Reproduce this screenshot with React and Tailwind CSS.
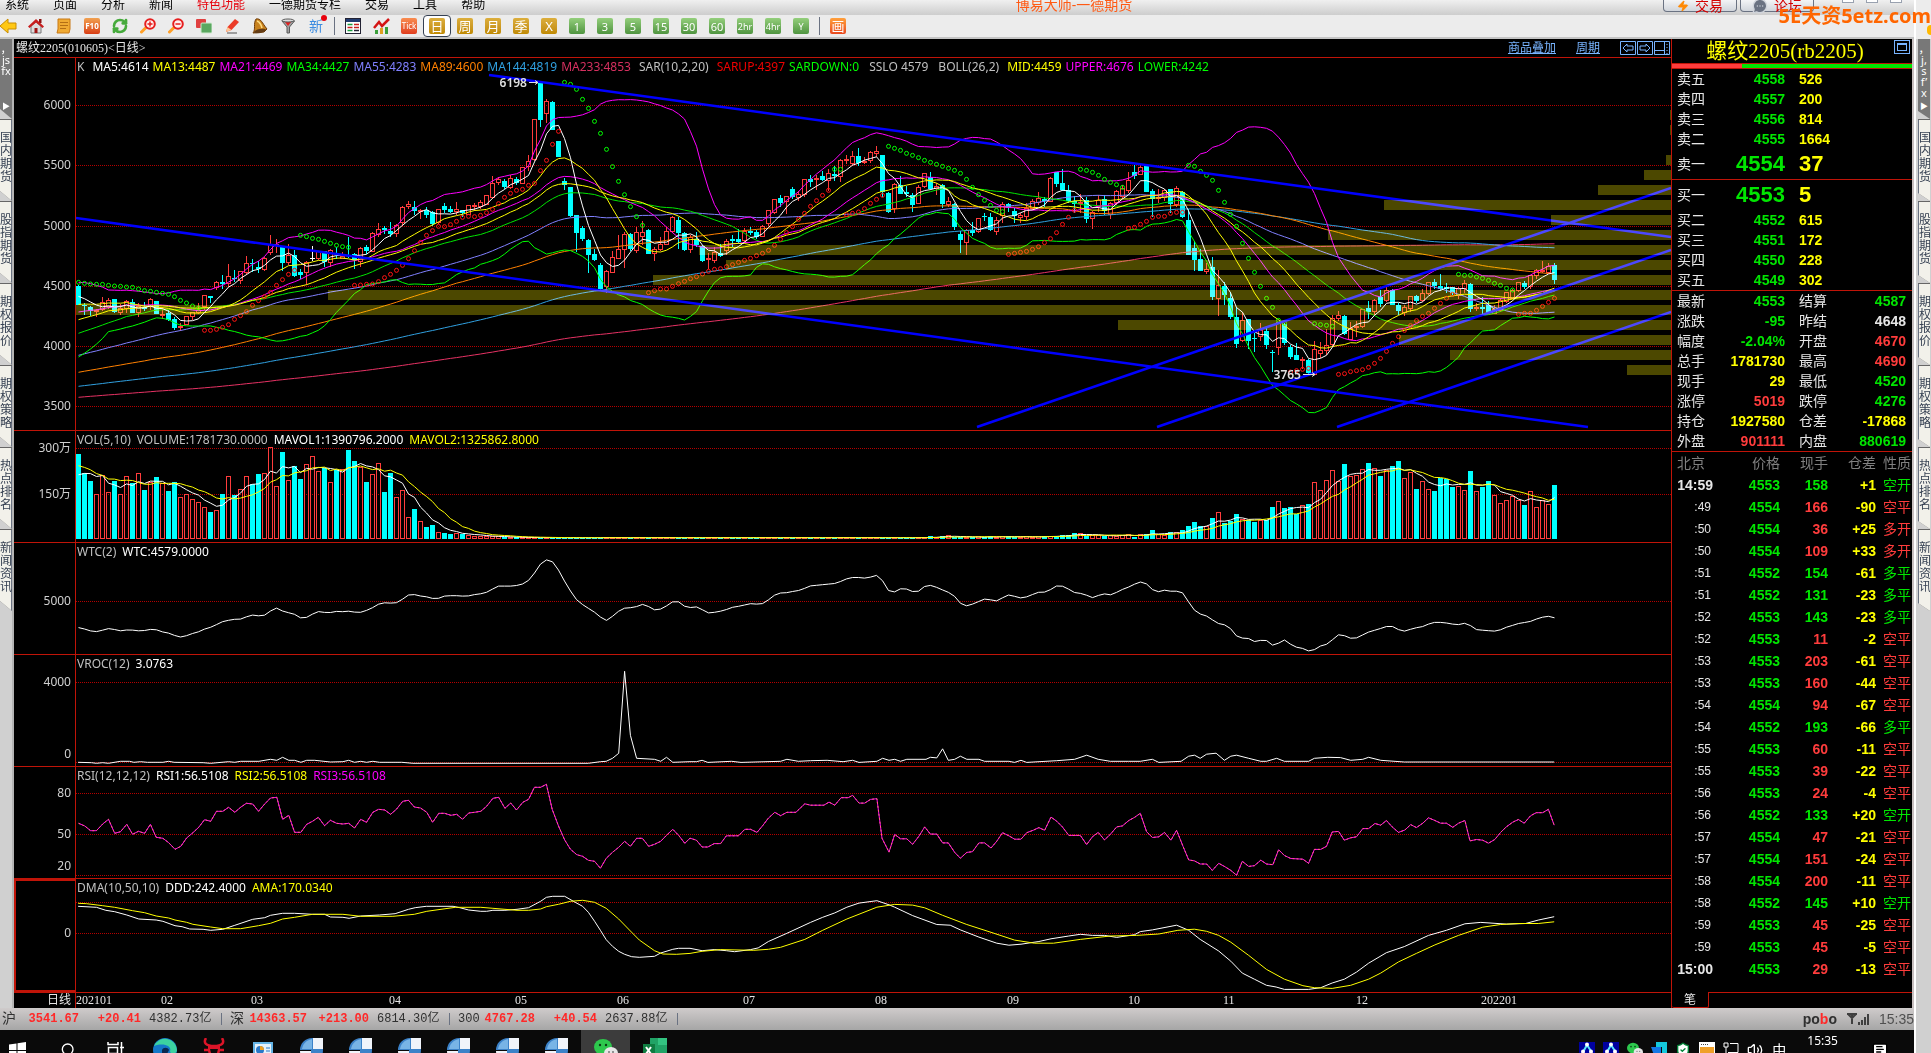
import React from 'react';
import { RefreshCw, Search, Volume2, ShieldCheck, MessageSquareText, Zap, MessageCircleMore } from 'lucide-react';

/* ---------- chart data ---------- */

// Series are stored in blocks: origin of the block and units per pixel on each axis
const A = [0, 100, 2.45, 3];
const B = [500, 60, 2.45, 3];
const C = [1100, 100, 2.6133, 3];
const E = [0, 780, 2.24, 3];
const D = [0, 430, 2.24, 3];
const F = [690, 520, 1.568, 2.942];

const BAR_STEP = 6;
const barX = (i) => 78.5 + i * BAR_STEP;

// kind (r up, c down, w flat) high top bottom low
const BARS_A = `c 556 558 614 614,c 610 614 618 644,c 618 622 632 648,r 626 630 634 650,r 590 608 628 632,r 594 600 620 628,c 597 597 635 638,r 612 626 636 644,r 600 604 626 640,c 598 606 638 640,r 608 620 638 650,c 606 620 628 634,r 594 598 618 630,c 602 602 641 642,r 620 642 643 656,c 630 640 659 662,c 652 656 684 690,r 668 680 680 692,r 648 650 674 676,r 636 638 650 660,r 608 630 636 642,r 585 587 618 630,c 588 588 594 610,r 542 547 562 570,c 524 546 551 566,r 492 528 550 560,c 510 534 536 546,r 512 514 542 552,r 468 490 516 524,c 478 490 492 516,c 484 502 508 520,r 472 476 508 512,r 405 433 458 464,r 418 433 435 458,c 441 441 488 514,r 432 466 486 496,c 450 466 528 532,c 508 515 526 536,r 484 486 518 556,w 438 474 476 484,r 452 454 474 480,c 454 454 486 500,r 446 452 488 500,c 440 458 466 478,r 456 468 474 478,c 410 464 468 474,c 460 462 480 506,r 440 446 484 502,c 434 442 452 462,r 397 400 454 456,r 370 388 402 412,c 378 383 391 402,c 365 394 402 410,r 372 376 401 412,r 318 322 368 378,r 302 313 319 326,c 304 320 332 344,r 328 332 335 356,c 322 330 345 354,c 334 336 372 378,r 328 328 366 372,c 308 318 330 340,c 318 327 336 340,r 306 328 335 344,c 330 330 340 352,r 314 316 342 344,r 310 316 318 334,r 300 306 319 326,r 286 286 312 314,r 228 250 291 296,r 232 238 247 256,c 236 243 262 268,r 226 234 262 268,c 232 236 250 256,r 202 202 250 252,r 165 184 200 214,r 56 58 178 184,c -54 -52 59 82,r -2 4 40 70,c 2 6 89 90,c 124 124 171 172,c 234 243 256 270,c 262 262 347 350,c 345 346 398 456,c 378 384 416 424,c 416 420 464 518,c 448 462 480 484,c 490 495 567 572,r 510 514 559 578,r 454 472 516 518,r 405 447 476 478,r 396 403 448 504,c 400 402 446 454,r 380 397 452 458`;
const BARS_B = `r 484 516 530 556,c 508 510 582 582,r 562 568 580 602,r 530 552 568 572,r 502 514 552 556,r 468 472 514 520,c 472 480 520 566,c 516 519 570 572,r 526 532 568 580,c 516 538 556 560,c 556 557 602 606,r 580 594 596 628,r 562 578 602 608,c 552 580 588 592,r 538 543 570 586,c 526 537 542 560,c 506 538 546 550,r 504 514 542 546,c 500 514 518 524,c 510 516 530 536,r 496 499 530 532,r 450 451 490 498,r 416 418 458 462,c 405 414 430 440,r 408 410 425 462,c 382 387 412 418,r 392 404 412 424,r 356 358 404 410,c 345 358 365 380,r 344 354 359 390,c 332 348 359 362,r 328 340 360 392,c 318 342 348 362,r 298 301 349 366,r 286 299 302 312,r 274 290 310 318,c 264 288 308 318,r 290 304 308 312,r 272 276 302 308,r 258 274 280 290,c 285 285 395 412,c 395 400 455 458,r 370 374 446 460,c 348 374 401 402,c 378 396 402 412,c 398 406 434 456,r 376 382 431 432,r 338 340 380 384,c 336 350 386 390,r 370 378 386 406,c 372 376 431 444,r 412 424 432 440,c 430 432 500 510,c 512 522 540 578,r 506 512 548 584,c 486 510 518 528,r 476 476 514 518,c 458 468 472 482,c 460 472 510 514,r 472 482 514 524,r 426 432 466 490,c 428 432 444 456,c 444 454 468 490,r 458 466 471 488,r 430 446 470 480,r 416 424 446 450,r 396 414 426 434,c 412 416 424 440,r 352 355 423 424,c 336 336 371 382,c 328 370 390 392,c 376 389 424 430,c 408 422 432 460,r 402 426 430 458,c 412 420 476 490,r 452 458 476 506,r 406 420 440 456,c 404 418 454 466,r 426 430 464 476`;
const BARS_C = `r 270 274 306 314,r 254 266 288 296,r 216 240 272 280,c 194 216 228 238,r 196 202 224 224,c 194 196 275 276,c 266 272 296 350,r 266 292 296 310,r 266 270 292 302,c 266 268 312 340,r 258 264 312 322,c 274 276 352 354,c 328 360 464 464,c 424 444 480 514,c 446 476 512 514,r 488 508 514 522,c 470 500 590 600,r 510 556 596 648,c 546 558 586 616,c 576 594 650 656,c 620 650 731 744,r 636 660 722 726,c 656 658 722 748,c 700 714 716 756,r 670 690 708 724,c 680 692 734 746,c 750 757 759 816,r 668 668 742 764,c 670 672 730 734,c 736 742 770 776,c 730 764 780 780,r 770 778 782 808,c 776 780 818 826,r 722 748 822 824,r 726 750 760 774,r 686 736 752 764,r 646 654 734 740,r 634 646 654 662,c 646 648 702 704,r 666 686 718 720,r 664 678 682 712,r 626 628 680 684,c 604 624 636 658,r 596 602 634 644,c 570 590 612 620,r 558 572 602 606,c 566 570 614 616,c 610 614 634 644,r 616 622 638 648,r 588 590 624 636,c 584 588 602 608,r 568 580 602 606,r 546 548 580 584,c 536 546 558 566,c 522 558 566 574,c 548 562 566 578,c 560 562 580 584,r 562 564 586 596,r 540 550 566 580,c 550 552 628 636,r 608 622 626 634,c 590 620 628 642,c 604 616 638 640,r 616 628 640 642,r 594 600 632 636,r 578 578 604 608,r 566 570 594 596,r 546 548 570 576,c 544 550 562 568,r 524 526 560 566,r 508 512 526 538,r 484 510 513 518,r 488 500 518 522,c 490 495 540 552`;

function parseBars(text, [, oy, , sy]) {
  return text.split(',').map((row) => {
    const [kind, ...v] = row.split(' ');
    const [high, top, bottom, low] = v.map((n) => oy + Number(n) / sy);
    return { kind, high, top, bottom, low, close: kind === 'r' ? top : bottom };
  });
}

const bars = [...parseBars(BARS_A, A), ...parseBars(BARS_B, B), ...parseBars(BARS_C, C)];

const VOLS_EARLY = [
  1062, 1119, 1143, 1183, 1126, 1177, 1144, 1183, 1129, 1150, 1120, 1170, 1148, 1131, 1150, 1173, 1147, 1192, 1183, 1198,
  1207, 1222, 1236, 1231, 1182, 1129, 1186, 1168, 1129, 1153, 1122, 1120, 1042, 1159, 1056, 1141, 1098, 1137, 1093, 1069,
  1114, 1104, 1147, 1110, 1108, 1050, 1083, 1102, 1146, 1123, 1090, 1176, 1119, 1192, 1171, 1252, 1227, 1264, 1281, 1275,
  1297, 1299, 1302, 1299, 1302, 1306, 1308, 1308, 1309, 1310, 1310, 1311, 1312, 1312,
];
const VOLS_LATE = [
  1309, 1311, 1308, 1306, 1311, 1312, 1312, 1311, 1310, 1312, 1309, 1311, 1310, 1308, 1311, 1311, 1310, 1311, 1310,
  1309, 1308, 1308, 1306, 1304, 1300, 1300, 1308, 1307, 1306, 1308, 1306, 1308, 1305, 1303, 1311, 1303, 1302, 1290,
  1304, 1306, 1296, 1297, 1290, 1278, 1266, 1278, 1280, 1254, 1237, 1269, 1262, 1242, 1258, 1260, 1266, 1262, 1260, 1221,
  1203, 1224, 1221, 1243, 1216, 1212, 1147, 1171, 1141, 1111, 1144, 1092, 1128, 1126, 1108, 1089, 1104, 1128, 1110, 1098,
  1083, 1135, 1116, 1167, 1144, 1168, 1173, 1135, 1138, 1161, 1159, 1171, 1113, 1174, 1161, 1143, 1186, 1210, 1201, 1189,
  1200, 1215, 1174, 1222, 1200, 1213, 1155,
];
const VOL_BASE = 538.7;
// The contract hardly trades in between
const quiet = Array(bars.length - VOLS_EARLY.length - VOLS_LATE.length).fill(1313);
const vols = [...VOLS_EARLY, ...quiet, ...VOLS_LATE].map((v) => 100 + v / 3);

// History before the first visible bar: [count, level], oldest first
const HISTORY = [[89, 945], [55, 927], [34, 899], [21, 873], [8, 833], [5, 756], [8, 673], [8, 628], [4, 583]];
const history = HISTORY.flatMap(([n, v]) => Array(n).fill(100 + v / 3));
const closes = [...history, ...bars.map((b) => b.close)];
const volHistory = [...Array(5).fill(100 + 1070 / 3), ...Array(4).fill(100 + 1140 / 3)];

function average(src, n, offset) {
  return src.slice(offset).map((_, i) => {
    const win = src.slice(Math.max(0, offset + i - n + 1), offset + i + 1);
    return win.reduce((s, v) => s + v, 0) / win.length;
  });
}

function band(n, k) {
  return bars.map((_, i) => {
    const end = history.length + i + 1;
    const win = closes.slice(end - n, end);
    const mean = win.reduce((s, v) => s + v, 0) / n;
    const dev = Math.sqrt(win.reduce((s, v) => s + (v - mean) ** 2, 0) / n);
    return mean + k * dev;
  });
}

const ma = (n) => average(closes, n, history.length);
const toPoints = (ys) => ys.map((y, i) => `${barX(i)},${y.toFixed(1)}`).join(' ');

function trace([ox, oy, sx, sy], text) {
  return text
    .split(' ')
    .map((p) => p.split(',').map(Number))
    .map(([x, y]) => `${(ox + x / sx).toFixed(1)},${(oy + y / sy).toFixed(1)}`)
    .join(' ');
}

const priceLines = [
  ['#e63264', ma(233)],
  ['#30a0e0', ma(144)],
  ['#ff8000', ma(89)],
  ['#8080ff', ma(55)],
  ['#00e600', ma(34)],
  ['#ff00ff', ma(21)],
  ['#ffff00', ma(13)],
  ['#ffff00', band(26, 0)],
  ['#ff00ff', band(26, -2)],
  ['#00ff00', band(26, 2)],
  ['#ffffff', ma(5)],
].map(([color, ys]) => ({ color, points: toPoints(ys) }));

const typical = bars.map((b) => (b.high + b.low + 2 * b.close) / 4);
const wtc = toPoints(typical.map((v, i) => 601.5 + ((v + typical[Math.max(0, i - 1)]) / 2 - 226.3) * 0.355));

// [block, first bar, up trend, levels]
const SAR = [
  [A, 0, false, [547, 550, 552, 553, 553, 556, 558, 559, 561, 562, 567, 572, 574, 577, 580, 583, 590, 601, 609, 618, 624]],
  [A, 21, true, [691, 691, 688, 682, 674, 658, 647, 635, 616, 602, 590, 577, 556, 539, 523, 511]],
  [A, 37, false, [406, 410, 415, 418, 424, 430, 436, 440, 442]],
  [A, 46, true, [556, 555, 553, 552, 545, 533, 523, 511, 496, 476, 452, 427, 406, 392, 379, 380, 374, 364, 352, 349, 350, 346, 338, 328, 311, 292, 280, 271, 268, 256, 250, 212, 181, 133, 94]],
  [B, 81, false, [67, 73, 88, 118, 145, 184, 220, 268, 320, 364, 404, 440, 470, 496]],
  [B, 95, true, [698, 692, 687, 687, 679, 671, 664, 656, 650, 642, 634, 628, 626, 620, 614, 607, 601, 595, 587, 580, 571, 556, 538, 518, 500, 478, 460, 439, 422, 406, 391]],
  [B, 126, false, [328, 328]],
  [B, 128, true, [464, 460, 456, 446, 430, 418, 406]],
  [B, 135, false, [259, 265, 271, 280, 286, 293, 301, 307, 313, 319, 325, 331, 340, 358, 382, 404, 421, 436, 451, 455]],
  [B, 155, true, [583, 580, 577, 574, 568, 560, 548, 536, 518, 493, 472, 451]],
  [B, 167, false, [328, 331, 337, 346, 358, 367, 374, 382]],
  [C, 175, true, [385, 382, 373, 364, 352, 349, 349, 340, 337, 337]],
  [C, 185, false, [196, 199, 214, 226, 241, 271, 307, 343, 379, 430, 475, 517, 559, 595, 622, 661, 670]],
  [C, 202, true, [816, 812, 808, 805]],
  [C, 206, false, [671, 674, 676, 679]],
  [C, 210, true, [823, 821, 815, 812, 809, 802, 790, 775, 754, 730, 710, 691, 677, 662, 649, 640, 625, 610, 595, 583]],
  [C, 230, false, [523, 526, 526, 531, 535, 541, 550, 556, 565, 570]],
  [C, 240, true, [643, 640, 640, 631, 619, 607, 595]],
];

// Left edge of every price-by-volume row, 15px apart starting at y=110
const PROFILE = [1670, 1670, null, 1666, 1644, 1598, 1384, 1551, 1328, 699, 726, 653, 328, 76, 1118, 1399, 1450, 1627];

const VROC = `${trace(D, '175,997 205,998 216,1000 230,998 243,1000 270,994 290,994 300,997 315,995 330,997 365,997 378,994 390,997 455,998 472,1000 512,995 526,997 539,994 580,994 606,988 620,991 633,982 647,991 660,991 674,997 687,991 705,991 740,996 768,995 781,991 794,997 808,994 821,997 835,994 850,997 900,997 925,1000 1318,1000 1345,995 1358,994 1372,985 1386,970 1399,724 1412,916 1426,985 1466,988 1480,994 1493,982 1507,997')} ${trace(F, '0,711 10,711 19,707 28,713 65,710 80,713 142,710 152,704 170,710 189,708 215,707 240,711 255,707 265,713 293,710 302,701 312,707 321,704 330,710 340,704 370,704 377,698 387,700 396,673 405,707 415,704 424,695 434,704 453,704 462,710 500,710 509,713 519,707 528,713 575,708 603,704 622,692 640,704 659,710 688,710 706,710 725,704 735,713 770,710 782,695 791,692 800,701 810,689 825,686 838,707 848,695 857,692 876,701 895,710 904,710 920,701 932,710 970,710 979,701 1000,698 1020,699 1036,707 1055,704 1064,698 1083,707 1120,712 1355,712')}`;

const RSI = `${trace(E, '176,130 190,138 203,152 216,152 230,132 243,118 257,160 270,155 284,133 297,163 310,154 324,160 337,133 350,172 365,175 378,188 392,208 405,199 418,174 432,158 445,142 458,119 472,124 485,94 499,94 512,82 526,97 539,82 552,70 566,72 579,94 593,72 606,54 620,52 633,118 647,106 660,157 674,157 687,133 700,124 713,112 727,137 740,121 754,130 768,132 781,130 794,144 808,118 821,127 835,97 848,88 862,90 875,103 888,88 902,64 915,61 928,81 942,84 956,97 969,127 983,100 996,100 1010,106 1023,103 1036,118 1050,99 1063,97 1077,94 1090,79 1104,55 1117,52 1131,85 1144,69 1157,90 1171,67 1184,58 1197,22 1211,22 1224,13 1237,88 1251,138 1265,180 1278,208 1292,224 1305,229 1318,241 1332,244 1345,265 1358,235 1372,217 1386,202 1399,184 1412,199 1426,175 1439,175 1453,199 1466,193 1480,184 1493,166 1507,148 1520,166 1534,190')} ${trace(F, '0,936 10,942 19,962 28,962 38,952 48,952 57,929 76,929 86,910 95,910 105,919 114,899 123,877 133,860 142,870 152,860 166,860 180,835 189,839 210,839 218,830 227,839 237,817 248,817 255,810 265,833 274,833 283,822 293,820 301,936 312,977 321,925 330,938 340,938 349,954 359,930 368,903 377,924 387,924 396,950 405,950 415,978 424,995 434,978 443,976 453,950 462,950 472,965 481,945 490,920 500,929 509,939 519,939 528,920 538,913 547,905 556,913 566,874 575,886 584,903 594,928 612,928 622,955 631,932 640,919 650,941 659,925 669,903 678,900 688,884 697,875 706,863 716,917 725,934 735,932 744,919 754,942 763,913 773,960 782,1000 791,1003 800,1012 810,1012 819,1031 829,1010 838,1019 848,1031 857,1045 866,1004 876,1019 885,1017 895,1001 904,1012 914,1014 923,970 932,987 942,996 961,998 970,1010 979,969 989,969 998,960 1007,918 1017,916 1026,942 1036,935 1045,932 1055,908 1064,908 1074,893 1083,898 1092,884 1101,903 1111,919 1121,912 1130,896 1139,905 1149,892 1158,876 1168,884 1177,892 1186,892 1196,904 1205,892 1215,884 1223,944 1233,940 1243,942 1252,951 1262,940 1271,919 1280,903 1290,889 1299,881 1308,892 1318,870 1327,861 1337,861 1346,851 1355,898')}`;

const DDD = `${trace(E, '175,379 216,382 237,391 257,395 284,405 311,417 350,420 365,424 392,437 408,440 425,447 455,448 472,451 499,448 526,436 566,418 593,413 606,406 633,400 660,400 700,403 727,403 740,411 768,412 782,415 808,408 850,405 885,401 915,388 930,383 955,379 1015,379 1030,383 1050,390 1077,394 1090,394 1104,391 1131,391 1158,388 1184,383 1211,364 1224,352 1238,349 1265,349 1290,368 1305,379 1318,397 1332,424 1345,451 1358,479 1372,499 1386,514 1399,523 1415,530 1432,532 1466,529 1480,519 1507,508 1520,505')} ${trace(F, '0,1260 19,1267 38,1264 57,1267 70,1270 95,1264 107,1259 123,1240 152,1216 189,1184 208,1169 227,1156 246,1139 265,1127 293,1120 312,1132 321,1139 349,1164 387,1190 408,1192 424,1206 453,1227 481,1245 500,1251 519,1248 547,1240 566,1232 594,1224 612,1219 631,1222 650,1222 669,1228 697,1220 706,1211 725,1206 763,1192 782,1207 800,1234 829,1268 848,1298 866,1333 885,1351 904,1369 919,1374 932,1381 970,1381 989,1376 1007,1362 1026,1351 1045,1330 1064,1304 1092,1273 1120,1255 1158,1222 1186,1207 1215,1188 1240,1184 1280,1189 1310,1187 1330,1177 1355,1167')}`;

const AMA = `${trace(E, '175,370 194,371 230,377 257,382 297,392 324,398 350,408 378,414 392,420 418,427 432,433 472,441 499,446 539,446 579,437 606,430 633,417 660,412 700,403 768,403 808,409 880,409 928,403 956,394 1020,382 1077,382 1104,385 1158,391 1184,391 1211,387 1224,380 1251,373 1278,364 1305,361 1332,367 1358,385 1386,417 1412,453 1432,480 1466,512 1485,522 1515,523')} ${trace(F, '0,1275 19,1269 48,1264 100,1266 123,1263 142,1257 180,1234 208,1207 246,1174 293,1139 321,1131 349,1133 368,1141 396,1163 434,1190 472,1213 509,1236 540,1245 570,1245 612,1234 659,1224 700,1222 735,1218 765,1207 791,1204 810,1210 829,1222 848,1242 876,1281 904,1322 932,1351 961,1370 979,1376 1007,1378 1036,1369 1064,1351 1083,1333 1111,1300 1139,1275 1168,1250 1205,1222 1243,1198 1271,1190 1300,1187 1330,1187 1355,1182')}`;

/* ---------- quote data ---------- */

const G = 'text-[#00e600]';
const R = 'text-[#ff3c3c]';
const Y = 'text-[#ffff00]';
const W = 'text-[#e6e6e6]';

const ASKS = [['卖五', 4558, 526], ['卖四', 4557, 200], ['卖三', 4556, 814], ['卖二', 4555, 1664]];
const BIDS = [['买二', 4552, 615], ['买三', 4551, 172], ['买四', 4550, 228], ['买五', 4549, 302]];

const STATS = [
  ['最新', '4553', G, '结算', '4587', G],
  ['涨跌', '-95', G, '昨结', '4648', W],
  ['幅度', '-2.04%', G, '开盘', '4670', R],
  ['总手', '1781730', Y, '最高', '4690', R],
  ['现手', '29', Y, '最低', '4520', G],
  ['涨停', '5019', R, '跌停', '4276', G],
  ['持仓', '1927580', Y, '仓差', '-17868', Y],
  ['外盘', '901111', R, '内盘', '880619', G],
];

const TICKS = [
  ['14:59', 4553, 158, '+1', '空开', G],
  [':49', 4554, 166, '-90', '空平', R],
  [':50', 4554, 36, '+25', '多开', R],
  [':50', 4554, 109, '+33', '多开', R],
  [':51', 4552, 154, '-61', '多平', G],
  [':51', 4552, 131, '-23', '多平', G],
  [':52', 4553, 143, '-23', '多平', G],
  [':52', 4553, 11, '-2', '空平', R],
  [':53', 4553, 203, '-61', '空平', R],
  [':53', 4553, 160, '-44', '空平', R],
  [':54', 4554, 94, '-67', '空平', R],
  [':54', 4552, 193, '-66', '多平', G],
  [':55', 4553, 60, '-11', '空平', R],
  [':55', 4553, 39, '-22', '空平', R],
  [':56', 4553, 24, '-4', '空平', R],
  [':56', 4552, 133, '+20', '空开', G],
  [':57', 4554, 47, '-21', '空平', R],
  [':57', 4554, 151, '-24', '空平', R],
  [':58', 4554, 200, '-11', '空平', R],
  [':58', 4552, 145, '+10', '空开', G],
  [':59', 4553, 45, '-25', '空平', R],
  [':59', 4553, 45, '-5', '空平', R],
  ['15:00', 4553, 29, '-13', '空平', R],
];

const SERIF = "font-['Liberation_Serif','Noto_Sans_CJK_SC',serif]";

/* ---------- header ---------- */

function MenuBar() {
  const items = ['系统', '页面', '分析', '新闻', '特色功能', '一德期货专栏', '交易', '工具', '帮助'];
  return (
    <header className="flex h-[15px] overflow-hidden bg-linear-to-b from-[#f0f0f0] to-[#cdcdcd] text-xs leading-[9px] text-black">
      <nav className="flex gap-6 pl-[5px]">
        {items.map((t) => (
          <button key={t} className={`h-[9px] whitespace-nowrap ${t === '特色功能' ? 'text-red-600' : ''}`}>
            {t}
          </button>
        ))}
      </nav>
      <h1 className="flex-1 text-center text-sm leading-[9px] text-[#ff5a14]">博易大师-一德期货</h1>
      <div className="flex h-3 gap-[3px] text-[#d40000]">
        <button className="flex h-3 w-[74px] items-center justify-center gap-1.5 rounded-b border border-t-0 border-gray-500 bg-linear-to-b from-gray-100 to-gray-300 text-sm leading-none">
          <Zap className="h-3 w-3 fill-orange-400 text-orange-400" />
          交易
        </button>
        <button className="flex h-3 w-[74px] items-center justify-center gap-1.5 rounded-b border border-t-0 border-gray-500 bg-linear-to-b from-gray-100 to-gray-300 text-sm leading-none">
          <MessageCircleMore className="h-4 w-4 fill-gray-500 text-gray-300" />
          论坛
        </button>
      </div>
      <div className="flex w-[100px] justify-end gap-3 pr-3">
        {['最小化', '最大化', '关闭'].map((t) => (
          <button key={t} aria-label={t} className="h-[3px] w-3 border border-t-0 border-gray-400 bg-white" />
        ))}
      </div>
    </header>
  );
}

function Chip({ label, children, active }) {
  return (
    <button
      aria-label={label}
      className={`flex h-[22px] w-7 shrink-0 items-center justify-center ${active ? 'rounded border border-gray-700 bg-white' : ''}`}
    >
      {children}
    </button>
  );
}

function Tile({ text, className }) {
  return (
    <span className={`flex h-4 w-4 items-center justify-center rounded-xs bg-linear-to-b leading-none text-white ${className}`}>
      {text}
    </span>
  );
}

function Lens({ plus }) {
  return (
    <svg width="16" height="16" viewBox="0 0 16 16" fill="none" strokeLinecap="round">
      <path d="M1.500 14 6 9.500" stroke="#ffa028" strokeWidth="3" />
      <circle cx="10" cy="6" r="4.800" fill="#fff0f0" stroke="#e61e1e" strokeWidth="2" />
      <path d={plus ? 'M8 6h4M10 4v4' : 'M8 6h4'} stroke="#e61e1e" strokeWidth="1.500" />
    </svg>
  );
}

function Toolbar() {
  const gold = 'from-[#dcae3c] to-[#c08a00] text-[13px]';
  const green = 'from-[#94cf7c] to-[#4f9440] text-[11px]';
  return (
    <div className="flex h-6 items-start border-b-2 border-[#c4c4c4] bg-[#ececec]">
      <div className="-ml-1.5 flex">
        <Chip label="后退">
          <svg width="18" height="16" viewBox="0 0 18 16">
            <path d="M1 8 9 1v4h8v6H9v4Z" fill="#ffc814" stroke="#c88c00" />
          </svg>
        </Chip>
        <Chip label="首页">
          <svg width="16" height="16" viewBox="0 0 16 16">
            <path d="M3 8v7h10V8L8 4Z" fill="#dcdcdc" stroke="#787878" />
            <path d="M11 1h2.500v4H11Z" fill="#8c1414" />
            <path d="M0 8.500 8 1l8 7.500-1.500 1.500L8 4.500 1.500 10Z" fill="#c81e1e" />
            <path d="M6.500 10h3v5h-3Z" fill="#a01414" />
          </svg>
        </Chip>
        <Chip label="便笺">
          <svg width="16" height="16" viewBox="0 0 16 16">
            <path d="M2 1h12v10l-1 4H1l1-4Z" fill="#f0aa32" stroke="#c87814" />
            <path d="M4 4.500h8M4 7.500h8M4 10.500h6" stroke="#b46e14" />
          </svg>
        </Chip>
        <Chip label="F10"><Tile text="F10" className="from-[#f0a050] to-[#d83c14] text-[8px] font-bold" /></Chip>
        <Chip label="刷新"><RefreshCw className="h-4 w-4 text-[#46aa3c]" strokeWidth={4} /></Chip>
        <Chip label="放大"><Lens plus /></Chip>
        <Chip label="缩小"><Lens /></Chip>
        <Chip label="叠加">
          <svg width="16" height="16" viewBox="0 0 16 16">
            <rect x="0" y="1" width="10" height="9" rx="1" fill="#e04040" />
            <rect x="5" y="5" width="11" height="10" rx="1" fill="#5aa860" stroke="#cde8cd" />
          </svg>
        </Chip>
        <Chip label="画线">
          <svg width="16" height="16" viewBox="0 0 16 16">
            <path d="M2 14 3.500 9 11 1l4 3-7.500 8Z" fill="#eb3c28" />
            <path d="M2 14 3.500 9l4 3Z" fill="#ffc896" />
            <path d="M3 15h10" stroke="#505050" />
          </svg>
        </Chip>
        <Chip label="预警">
          <svg width="16" height="16" viewBox="0 0 16 16">
            <path d="M4 1c5-1 6 4 11 10l-3 3-11 1c3-4 0-9 3-14Z" fill="#c8821e" stroke="#6e3c0a" />
            <ellipse cx="8" cy="13" rx="6" ry="2" fill="#643c14" transform="rotate(-12 8 13)" />
            <path d="M5 3c3 1 4 3 5 7" stroke="#ffdc82" strokeWidth="1.500" fill="none" />
          </svg>
        </Chip>
        <Chip label="筛选">
          <svg width="16" height="16" viewBox="0 0 16 16">
            <path d="M2 3 7 9v6h2.500V9l5-6Z" fill="#a0a0a0" stroke="#5a5a5a" />
            <path d="m5 4 3 4 3-4Z" fill="#e61e1e" />
            <ellipse cx="8" cy="2.500" rx="6" ry="1.500" fill="#dcdcdc" stroke="#5a5a5a" />
          </svg>
        </Chip>
        <Chip label="新">
          <span className="relative text-sm leading-none text-[#3c8ce0]">
            新
            <i className="absolute -top-1 -right-1 h-1.5 w-1.5 rounded-full bg-red-600" />
          </span>
        </Chip>
      </div>
      <span className="mx-1 h-[18px] w-px self-center bg-gray-500" />
      <Chip label="报价">
        <svg width="16" height="16" viewBox="0 0 16 16">
          <rect x=".5" y=".5" width="15" height="15" fill="#fff" stroke="#223" />
          <path d="M1 2.500h14" stroke="#223c70" strokeWidth="3" />
          <path d="M2.500 6.500h5M2.500 12.500h5" stroke="#1a9c3c" strokeWidth="1.500" />
          <path d="M9 6.500h5M9 9.500h5M2.500 9.500h5" stroke="#c82020" strokeWidth="1.500" />
          <path d="M9 12.500h5" stroke="#223" strokeWidth="1.500" />
        </svg>
      </Chip>
      <Chip label="走势">
        <svg width="17" height="16" viewBox="0 0 17 16">
          <path d="M2 16v-4h3v4ZM12 16V9h3v7Z" fill="#3ca03c" />
          <path d="M7 16v-6h3v6Z" fill="#e0a020" />
          <path d="M1 10 6 4l3 4 7-7" fill="none" stroke="#d41414" strokeWidth="2.500" />
        </svg>
      </Chip>
      <Chip label="Tick"><Tile text="Tick" className="from-[#f88c50] to-[#e03c1e] text-[8px]" /></Chip>
      {['日', '周', '月', '季', 'X'].map((t) => (
        <Chip key={t} label={t} active={t === '日'}><Tile text={t} className={gold} /></Chip>
      ))}
      {['1', '3', '5', '15', '30', '60'].map((t) => (
        <Chip key={t} label={t}><Tile text={t} className={green} /></Chip>
      ))}
      {['2hr', '4hr', 'Y'].map((t) => (
        <Chip key={t} label={t}><Tile text={t} className="from-[#94cf7c] to-[#4f9440] text-[9px]" /></Chip>
      ))}
      <span className="mx-1 h-[18px] w-px self-center bg-gray-500" />
      <Chip label="画"><Tile text="画" className="from-[#ffa03c] to-[#e8461e] text-[13px]" /></Chip>
    </div>
  );
}

/* ---------- side tabs ---------- */

function SideTabs({ side }) {
  const left = side === 'left';
  const tabs = ['国内期货', '股指期货', '期权报价', '期权策略', '热点排名', '新闻资讯'];
  const head = left ? ['，', 'js', 'fx'] : ['，', 'j,', 's', 'f’', 'x'];
  const clip = left
    ? '[clip-path:polygon(0_0,100%_0,100%_100%,0_calc(100%-10px))]'
    : '[clip-path:polygon(0_0,100%_0,100%_100%,0_calc(100%-8px))]';
  return (
    <nav className={`w-3 shrink-0 overflow-hidden bg-[#d0d0d0] text-xs leading-[13px] text-gray-700 ${left ? '' : 'ml-0.5'}`}>
      <button className={`flex h-20 w-full flex-col items-center bg-[#787878] pt-1 text-[11px] leading-[11px] text-white ${clip}`}>
        {head.map((t) => <span key={t}>{t}</span>)}
        <span className="mt-auto pb-2 text-[8px]">▶</span>
      </button>
      {tabs.map((t) => (
        <div key={t} className={`bg-[#666] pt-px ${clip}`}>
          <button className={`h-[81px] w-full bg-[#f2f1ea] pb-2 break-all ${left ? 'border-r border-gray-500' : 'border-l border-gray-500'}`}>
            {t}
          </button>
        </div>
      ))}
    </nav>
  );
}

/* ---------- charts ---------- */

function Panel({ top, height, legend, ticks, grid, active, tight, children }) {
  return (
    <section className="flex min-h-0 border-b border-[#c01408]">
      <div className={`relative w-[62px] shrink-0 ${active ? 'border-2 border-r border-[#c01408]' : 'border-r border-[#c01408]'}`}>
        {ticks.map(([label, y]) => (
          <span
            key={label}
            className="absolute right-1 -translate-y-1/2 text-xs leading-4 text-[#d0d0d0]"
            style={{ top: `${((y - top) / height) * 100}%` }}
          >
            {label}
          </span>
        ))}
      </div>
      <div className="relative min-w-0 flex-1">
        <svg viewBox={`76 ${top} 1595 ${height}`} preserveAspectRatio="none" className="absolute inset-0 h-full w-full" fill="none">
          {grid.map((y) => (
            <path key={y} d={`M76 ${y}H1671`} stroke="#b40000" strokeDasharray="1 1" shapeRendering="crispEdges" />
          ))}
          {children}
        </svg>
        <p className={`absolute top-px left-px flex text-xs leading-4 whitespace-nowrap text-[#c0c0c0] ${tight ? 'gap-1' : 'gap-1.5'}`}>
          {legend.map(([t, c]) => (
            <span key={t} className={c}>{t}</span>
          ))}
        </p>
      </div>
    </section>
  );
}

function Candle({ bar, x }) {
  const color = { r: '#ff3c3c', c: '#00ffff', w: '#ffffff' }[bar.kind];
  const h = Math.max(1, bar.bottom - bar.top);
  return (
    <g stroke={color} shapeRendering="crispEdges">
      <path d={`M${x} ${bar.high}V${bar.top}M${x} ${bar.bottom}V${bar.low}`} />
      {bar.kind === 'r' ? (
        <rect x={x - 2} y={bar.top} width="4" height={h} />
      ) : (
        <rect x={x - 2.5} y={bar.top} width="5" height={h} fill={color} stroke="none" />
      )}
    </g>
  );
}

function PriceChart() {
  return (
    <>
      {bars.map((b, i) => (
        <Candle key={i} bar={b} x={barX(i)} />
      ))}
      {priceLines.map((l, i) => (
        <polyline key={i} points={l.points} stroke={l.color} />
      ))}
      {SAR.map(([block, first, up, ys]) =>
        ys.map((v, i) => (
          <circle key={first + i} cx={barX(first + i)} cy={block[1] + v / block[3]} r="2" stroke={up ? '#ff1414' : '#00ff00'} />
        ))
      )}
      <path
        d="M489 75 1671 237M76 218 1588 427M977 427 1671 188M1157 427 1671 250M1337 427 1671 312"
        stroke="#0000ff"
        strokeWidth="2.500"
      />
      <g className="mix-blend-screen" fill="#4c4800" shapeRendering="crispEdges">
        {PROFILE.map((x, i) => x && <rect key={i} x={x} y={110 + i * 15} width={1671 - x} height="10" />)}
      </g>
      <path d="M529 82.500h9m-3-2 3 2-3 2M1303 374.500h12m-3-2 3 2-3 2" stroke="#e0e0e0" />
      <g className="text-xs font-semibold" fill="#e0e0e0" textAnchor="end">
        <text x="527" y="87">6198</text>
        <text x="1301" y="379">3765</text>
      </g>
    </>
  );
}

function VolumeChart() {
  return (
    <>
      <g shapeRendering="crispEdges">
        {vols.map((y, i) =>
          bars[i].kind === 'c' ? (
            <rect key={i} x={barX(i) - 2.5} y={y} width="5" height={VOL_BASE - y} fill="#00ffff" />
          ) : (
            <rect key={i} x={barX(i) - 2} y={y} width="4" height={VOL_BASE - y} stroke="#ff3c3c" />
          )
        )}
      </g>
      <polyline points={toPoints(average([...volHistory, ...vols], 5, 9))} stroke="#fff" />
      <polyline points={toPoints(average([...volHistory, ...vols], 10, 9))} stroke="#ff0" />
    </>
  );
}

const MONTHS = [
  ['202101', 76], ['02', 161], ['03', 251], ['04', 389], ['05', 515], ['06', 617], ['07', 743],
  ['08', 875], ['09', 1007], ['10', 1128], ['11', 1223], ['12', 1356], ['202201', 1481],
];

function Charts() {
  return (
    <main className="flex min-w-0 flex-1 flex-col bg-black">
      <div className="flex h-[19px] shrink-0 items-center border-b border-[#c01408] pl-0.5 text-xs leading-4">
        <h2 className={`flex-1 text-[#e6e6e6] ${SERIF}`}>螺纹2205(010605)&lt;日线&gt;</h2>
        <div className="flex items-center pr-px text-[#78b4ff]">
          <a href="#overlay" className="underline">商品叠加</a>
          <a href="#period" className="ml-5 underline">周期</a>
          <svg width="50" height="15" viewBox="0 0 50 15" fill="none" stroke="currentColor" className="ml-5">
            <path d="M.5.5h15v13H.5ZM17.500.5h15v13h-15ZM34.500.5h15v13h-15Z" />
            <path d="M3 7 7 3v2h6v4H7v2ZM30 7l-4-4v2h-6v4h6v2ZM34 9.500h10M44.500 1v13" />
            <path d="M47 3v10" strokeDasharray="1 2" />
          </svg>
        </div>
      </div>

      <div className="grid min-h-0 flex-1 grid-rows-[373fr_112fr_112fr_112fr_112fr_114fr]">
        <Panel
          top={58}
          height={372}
          tight
          grid={[105.5, 165.5, 226.5, 286.5, 346.5, 406.5]}
          ticks={[['6000', 105], ['5500', 165], ['5000', 226], ['4500', 286], ['4000', 346], ['3500', 406]]}
          legend={[
            ['K', 'mr-1'],
            ['MA5:4614', 'text-white'],
            ['MA13:4487', 'text-[#ff0]'],
            ['MA21:4469', 'text-[#f0f]'],
            ['MA34:4427', 'text-[#00ff00]'],
            ['MA55:4283', 'text-[#8080ff]'],
            ['MA89:4600', 'text-[#ff8000]'],
            ['MA144:4819', 'text-[#30a0e0]'],
            ['MA233:4853', 'text-[#d63060]'],
            ['SAR(10,2,20)', 'mx-1'],
            ['SARUP:4397', 'text-[#f00000]'],
            ['SARDOWN:0', 'text-[#00ff00]'],
            ['SSLO 4579', 'ml-1.5'],
            ['BOLL(26,2)', 'ml-1.5 mr-1'],
            ['MID:4459', 'text-[#ff0]'],
            ['UPPER:4676', 'text-[#f0f]'],
            ['LOWER:4242', 'text-[#00ff00]'],
          ]}
        >
          <PriceChart />
        </Panel>
        <Panel
          top={431}
          height={111}
          grid={[448.5, 494.5]}
          ticks={[['300万', 448], ['150万', 494]]}
          legend={[
            ['VOL(5,10)', ''],
            ['VOLUME:1781730.0000', ''],
            ['MAVOL1:1390796.2000', 'text-white'],
            ['MAVOL2:1325862.8000', 'text-[#ff0]'],
          ]}
        >
          <VolumeChart />
        </Panel>
        <Panel top={543} height={111} grid={[601.5]} ticks={[['5000', 601]]} legend={[['WTC(2)', ''], ['WTC:4579.0000', 'text-white']]}>
          <polyline points={wtc} stroke="#fff" />
        </Panel>
        <Panel top={655} height={111} grid={[682.5, 762.5]} ticks={[['4000', 682], ['0', 754]]} legend={[['VROC(12)', ''], ['3.0763', 'text-white']]}>
          <polyline points={VROC} stroke="#fff" />
        </Panel>
        <Panel
          top={767}
          height={111}
          grid={[793.5, 834.5, 875.5]}
          ticks={[['80', 793], ['50', 834], ['20', 866]]}
          legend={[
            ['RSI(12,12,12)', ''],
            ['RSI1:56.5108', 'text-white'],
            ['RSI2:56.5108', 'text-[#ff0]'],
            ['RSI3:56.5108', 'text-[#f0f]'],
          ]}
        >
          <polyline points={RSI} stroke="#ff00ff" />
          <polyline points={RSI} stroke="#ff6e6e" strokeDasharray="2 2" />
        </Panel>
        <Panel
          top={879}
          height={113}
          active
          grid={[902.5, 933.5]}
          ticks={[['0', 933]]}
          legend={[['DMA(10,50,10)', ''], ['DDD:242.4000', 'text-white'], ['AMA:170.0340', 'text-[#ff0]']]}
        >
          <polyline points={DDD} stroke="#fff" />
          <polyline points={AMA} stroke="#ff0" />
        </Panel>
      </div>

      <div className={`flex h-[15px] shrink-0 text-xs leading-[15px] text-[#e6e6e6] ${SERIF}`}>
        <span className="w-[62px] border-r border-[#c01408] pr-1 text-right">日线</span>
        <div className="relative flex-1">
          {MONTHS.map(([t, x]) => (
            <span key={t} className="absolute" style={{ left: `${((x - 76) / 1595) * 100}%` }}>{t}</span>
          ))}
        </div>
      </div>
    </main>
  );
}

/* ---------- quote board ---------- */

function DepthRow({ row: [label, price, qty], big }) {
  return (
    <tr className={big ? 'h-[30px] text-[22px]' : 'h-5 text-sm'}>
      <th className={`w-10 text-left text-sm font-normal ${W}`}>{label}</th>
      <td className={`w-[68px] text-right font-bold ${G}`}>{price}</td>
      <td className={`pl-[14px] text-left font-bold ${Y}`}>{qty}</td>
    </tr>
  );
}

function QuoteBoard() {
  return (
    <aside className="flex w-[241px] shrink-0 flex-col border-l border-[#c01408] bg-black text-sm leading-none">
      <div className="flex h-6 items-center">
        <h2 className={`flex-1 pl-1 text-center text-[21px] leading-6 text-[#ffff00] ${SERIF}`}>螺纹2205(rb2205)</h2>
        <button aria-label="窗口" className="mr-0.5 mb-2 flex h-[14px] w-4 items-center justify-center border border-[#78b4ff]">
          <i className="h-2 w-2.5 border border-t-2 border-[#78b4ff]" />
        </button>
      </div>
      <div className="flex h-1.5 border-y border-[#c01408]">
        <i className="w-[29%] bg-[#ff3c3c]" />
        <i className="flex-1 bg-[#00e600]" />
      </div>

      <table className="ml-[5px]">
        <tbody>
          {ASKS.map((r) => <DepthRow key={r[0]} row={r} />)}
          <DepthRow row={['卖一', 4554, 37]} big />
        </tbody>
      </table>
      <hr className="border-[#c01408]" />
      <table className="ml-[5px]">
        <tbody>
          <DepthRow row={['买一', 4553, 5]} big />
          {BIDS.map((r) => <DepthRow key={r[0]} row={r} />)}
        </tbody>
      </table>
      <hr className="border-[#c01408]" />

      <table className="mr-[6px] ml-[5px]">
        <tbody>
          {STATS.map(([a, av, ac, b, bv, bc]) => (
            <tr key={a} className="h-5">
              <th className={`w-9 text-left font-normal ${W}`}>{a}</th>
              <td className={`w-[72px] text-right font-bold ${ac}`}>{av}</td>
              <th className={`w-12 pl-[14px] text-left font-normal ${W}`}>{b}</th>
              <td className={`text-right font-bold ${bc}`}>{bv}</td>
            </tr>
          ))}
        </tbody>
      </table>
      <hr className="border-[#c01408]" />

      <table className="ml-[5px]">
        <thead>
          <tr className="h-[22px] text-[#808080]">
            <th className="w-9 text-left font-normal">北京</th>
            <th className="w-[67px] text-right font-normal">价格</th>
            <th className="w-12 text-right font-normal">现手</th>
            <th className="w-12 text-right font-normal">仓差</th>
            <th className="pr-px text-right font-normal">性质</th>
          </tr>
        </thead>
        <tbody>
          {TICKS.map(([time, price, qty, diff, kind, color], i) => (
            <tr key={i} className="h-[22px] font-bold">
              <td className={`text-right ${W} ${time.length > 3 ? '' : 'pr-0.5 text-xs font-normal'}`}>{time}</td>
              <td className={`text-right ${G}`}>{price}</td>
              <td className={`text-right ${color}`}>{qty}</td>
              <td className={`text-right ${Y}`}>{diff}</td>
              <td className={`pr-px text-right font-normal ${color}`}>{kind}</td>
            </tr>
          ))}
        </tbody>
      </table>
      <div className="mt-auto flex h-4">
        <button className="w-[37px] rounded-b-xs border-r border-b border-[#c01408] text-xs leading-3 text-[#e6e6e6]">笔</button>
        <span className="flex-1 border-t border-[#c01408]" />
      </div>
    </aside>
  );
}

/* ---------- footer ---------- */

function IndexQuote({ name, value, change, amount }) {
  return (
    <div className="grid w-[228px] shrink-0 grid-cols-[77px_62px_1fr] items-center">
      <span className="flex items-center justify-between">
        <span className={name === '300' ? '' : 'text-sm leading-none'}>{name}</span>
        <b className="text-[#ff2828]">{value}</b>
      </span>
      <b className="text-right text-[#ff2828]">{change}</b>
      <span className="mr-2 ml-2 flex items-center justify-between whitespace-nowrap">
        {amount}
        <i className="h-3 w-px bg-gray-500" />
      </span>
    </div>
  );
}

function StatusBar() {
  return (
    <footer className="flex h-[22px] shrink-0 items-center bg-linear-to-b from-[#cfcbcb] to-[#a6a6a6] pl-0.5 font-['Liberation_Mono','Noto_Sans_CJK_SC',monospace] text-xs text-[#303030]">
      <IndexQuote name="沪" value="3541.67" change="+20.41" amount="4382.73亿" />
      <IndexQuote name="深" value="14363.57" change="+213.00" amount="6814.30亿" />
      <IndexQuote name="300" value="4767.28" change="+40.54" amount="2637.88亿" />
      <div className="ml-auto flex items-center gap-2.5 font-['Liberation_Sans',sans-serif] text-sm">
        <b>po<span className="text-[#ff2828]">b</span>o</b>
        <svg width="22" height="12" viewBox="0 0 22 12" fill="none" stroke="#404040" strokeWidth="2">
          <path d="M0 1h10M1 1l4 4 4-4M5 1v10M12 12V9M15 12V7M18 12V4M21 12V1" />
        </svg>
        <time className="text-[#505050]">15:35</time>
      </div>
    </footer>
  );
}

function PieIcon() {
  return (
    <svg width="24" height="24" viewBox="0 0 24 24">
      <path d="M23 0H12A12 12 0 0 0 0 12h11v12c8 0 12-5 12-12Z" fill="#3c82c8" />
      <path d="M13 0h10v11H13Z" fill="#f0f4fa" />
      <path d="M0 13h11v11A11 11 0 0 1 0 13Z" fill="#f0f4fa" />
      <path d="M2 11C3 5 7 2 12 1v10Z" fill="#78b4e6" />
    </svg>
  );
}

function TaskButton({ label, children, active }) {
  return (
    <button aria-label={label} className={`flex h-[23px] w-[49px] shrink-0 items-start justify-center overflow-hidden pt-2 ${active ? 'bg-[#3c3c3c]' : ''}`}>
      {children}
    </button>
  );
}

function WeChat({ size }) {
  return (
    <svg width={size} height={size} viewBox="0 0 24 24">
      <ellipse cx="9" cy="9" rx="9" ry="8" fill="#2dc84d" />
      <circle cx="6" cy="7" r="1.200" fill="#0a3c14" />
      <circle cx="12" cy="7" r="1.200" fill="#0a3c14" />
      <ellipse cx="17" cy="15" rx="7" ry="6" fill="#e6e6e6" />
      <circle cx="15" cy="14" r="1" fill="#777" />
      <circle cx="19" cy="14" r="1" fill="#777" />
    </svg>
  );
}

function Taskbar() {
  return (
    <div className="flex h-[23px] shrink-0 overflow-hidden bg-[#0a0a0a] text-white">
      <div className="-ml-[7px] flex">
        <TaskButton label="开始">
          <svg width="17" height="17" viewBox="0 0 17 17" fill="#fff" className="mt-1">
            <path d="M0 2.500 7.500 1.500V8H0ZM8.500 1.300 17 0v8H8.500ZM0 9h7.500v6.500L0 14.500ZM8.500 9H17v8l-8.500-1.200Z" />
          </svg>
        </TaskButton>
        <TaskButton label="搜索"><Search className="mt-1 h-4 w-4 -scale-x-100" /></TaskButton>
        <TaskButton label="任务视图">
          <svg width="18" height="16" viewBox="0 0 18 16" fill="none" stroke="#fff" className="mt-1">
            <path d="M1 0v2.500h10V0M1.500 5.500h9v6h-9ZM14.500 0v12M13 5.500h4" strokeWidth="1.500" />
          </svg>
        </TaskButton>
        <TaskButton label="浏览器">
          <svg width="24" height="24" viewBox="0 0 24 24">
            <circle cx="12" cy="12" r="12" fill="#1478c8" />
            <path d="M1 8A12 12 0 0 1 24 12c0 4-7 5-7 1 2-4-5-9-16-5Z" fill="#3cd2a0" />
            <path d="M9 12c1-3 6-3 7 0l-2 4H9Z" fill="#0a2850" />
          </svg>
        </TaskButton>
        <TaskButton label="行情">
          <svg width="22" height="24" viewBox="0 0 22 24" fill="none" stroke="#dc1428">
            <path d="M3 0C0 5 3 8 11 8s11-3 8-8" strokeWidth="2.500" />
            <path d="M1 12h5l2 8h6l2-8h5" strokeWidth="2.500" />
            <path d="M5 9h12" strokeWidth="4" />
          </svg>
        </TaskButton>
        <TaskButton label="文档">
          <svg width="20" height="18" viewBox="0 0 20 18" className="mt-1">
            <rect width="20" height="18" fill="#64b4e6" />
            <rect x="2" y="2" width="16" height="14" fill="#e6f2fa" />
            <circle cx="7" cy="8" r="4" fill="#2878c8" />
            <path d="M7 8V4a4 4 0 0 1 4 4Z" fill="#f0a020" />
            <path d="M13 6h4M13 9h4" stroke="#2878c8" />
          </svg>
        </TaskButton>
        {[1, 2, 3, 4, 5, 6].map((n) => (
          <TaskButton key={n} label={`博易大师 ${n}`}><PieIcon /></TaskButton>
        ))}
        <TaskButton label="微信" active><WeChat size={24} /></TaskButton>
        <TaskButton label="表格">
          <svg width="24" height="22" viewBox="0 0 24 22">
            <path d="M7 0h17v22H7Z" fill="#21a366" />
            <path d="M15 0h9v7h-9Z" fill="#33c481" />
            <path d="M0 6h12v12H0Z" fill="#107c41" />
            <path d="m3 9 5 7M8 9l-5 7" stroke="#fff" strokeWidth="2" />
          </svg>
        </TaskButton>
      </div>

      <div className="ml-auto flex items-start gap-2 pt-3">
        {[1, 2].map((n) => (
          <svg key={n} width="16" height="16" viewBox="0 0 16 16">
            <rect width="16" height="16" fill="#0000a0" />
            <path d="M8 3 4 10M8 3l4 6" stroke="#5ae6ff" fill="none" strokeWidth="2" />
            <circle cx="8" cy="2.500" r="2" fill="#fff" />
            <circle cx="4" cy="9.500" r="2" fill="#fff" />
            <circle cx="12" cy="9.500" r="2" fill="#fff" />
          </svg>
        ))}
        <WeChat size={16} />
        <svg width="16" height="16" viewBox="0 0 16 16">
          <path d="M5 0h11v12h-5V5H5Z" fill="#14c8dc" />
          <path d="M0 5h10v11H4Z" fill="#1478e6" />
        </svg>
        <ShieldCheck className="h-4 w-4 fill-white text-green-700" />
        <svg width="16" height="16" viewBox="0 0 16 16">
          <path d="M0 0h16v16H0Z" fill="#fff" />
          <path d="M1 5h14v10H1Z" fill="#f0a028" />
          <path d="M2 2.500h7" stroke="#444" strokeDasharray="1 1" />
        </svg>
        <svg width="16" height="16" viewBox="0 0 16 16" fill="none" stroke="#fff">
          <path d="M1 1h4v4H1ZM3 5v8M7 1.500h8v9H5" />
        </svg>
        <Volume2 className="h-4 w-4" />
        <span className="w-4 text-center text-sm leading-4">中</span>
      </div>
      <time className="ml-5 pt-[3px] text-xs leading-4">15:35</time>
      <MessageSquareText className="mt-3 mr-[26px] ml-[34px] h-4 w-4 fill-white text-black" />
    </div>
  );
}

export default function App() {
  return (
    <div className="flex h-screen min-h-[700px] w-full overflow-hidden bg-[#d0d0d0] font-['Noto_Sans','Noto_Sans_CJK_SC',sans-serif]">
      <div className="flex min-w-0 flex-1 flex-col">
        <MenuBar />
        <Toolbar />
        <div className="flex min-h-0 flex-1">
          <SideTabs side="left" />
          <span className="w-0.5 bg-[#b4b4b4]" />
          <Charts />
          <div className="flex font-['Liberation_Sans','Noto_Sans_CJK_SC',sans-serif]">
            <QuoteBoard />
          </div>
          <span className="w-0.5 bg-[#c8c0c0]" />
        </div>
        <StatusBar />
        <Taskbar />
      </div>
      <div className="flex w-[17px] shrink-0 flex-col border-l-2 border-white">
        <div className="flex h-[39px] items-end justify-end bg-[#ececec]">
          <i className="mb-1 h-2.5 w-1 rounded-l-full bg-amber-400" />
        </div>
        <SideTabs side="right" />
      </div>
      <strong className="absolute top-1 right-0 text-xl leading-6 text-[#ff6600]">5E天资5etz.com</strong>
    </div>
  );
}
